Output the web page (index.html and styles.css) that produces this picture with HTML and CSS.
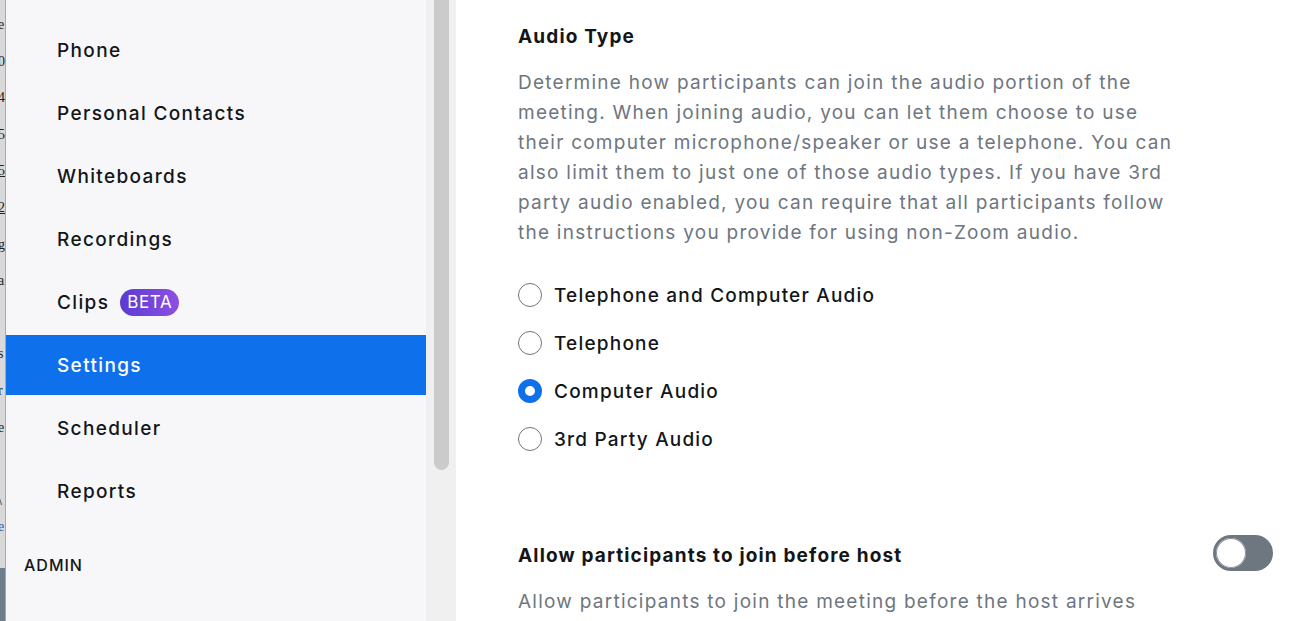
FILE: index.html
```html
<!DOCTYPE html>
<html lang="en">
<head>
<meta charset="utf-8">
<title>Settings</title>
<link rel="stylesheet" href="styles.css">
</head>
<body>
<div class="app">
  <div class="behind">
    <div class="behind-text">
      <span>e</span><span>0</span><span>4</span><span>5</span><span class="u">5</span><span class="u">2</span><span>g</span><span>a:</span><span></span><span>s</span><span>r</span><span>e</span><span></span><span class="small">\</span><span class="link">e</span>
    </div>
    <div class="behind-bottom"></div>
  </div>
  <nav class="sidebar">
    <ul class="nav">
      <li class="nav-item">Phone</li>
      <li class="nav-item">Personal Contacts</li>
      <li class="nav-item">Whiteboards</li>
      <li class="nav-item">Recordings</li>
      <li class="nav-item">Clips <span class="beta">BETA</span></li>
      <li class="nav-item active">Settings</li>
      <li class="nav-item">Scheduler</li>
      <li class="nav-item">Reports</li>
    </ul>
    <div class="section-label">ADMIN</div>
  </nav>
  <div class="gutter"><div class="thumb"></div></div>
  <main class="main">
    <section class="setting">
      <h2 class="setting-title">Audio Type</h2>
      <p class="setting-desc">Determine how participants can join the audio portion of the meeting. When joining audio, you can let them choose to use their computer microphone/speaker or use a telephone. You can also limit them to just one of those audio types. If you have 3rd party audio enabled, you can require that all participants follow the instructions you provide for using non-Zoom audio.</p>
      <div class="radios">
        <label class="radio"><span class="dot"></span>Telephone and Computer Audio</label>
        <label class="radio"><span class="dot"></span>Telephone</label>
        <label class="radio"><span class="dot checked"></span>Computer Audio</label>
        <label class="radio"><span class="dot"></span>3rd Party Audio</label>
      </div>
    </section>
    <section class="setting setting-toggle">
      <div class="setting-row">
        <h2 class="setting-title">Allow participants to join before host</h2>
        <span class="toggle"><span class="knob"></span></span>
      </div>
      <p class="setting-desc">Allow participants to join the meeting before the host arrives</p>
    </section>
  </main>
</div>
</body>
</html>
```

FILE: styles.css
```css
* { box-sizing: border-box; }
html, body { margin: 0; padding: 0; }
body {
  width: 1292px;
  height: 621px;
  overflow: hidden;
  background: #ffffff;
  font-family: Inter, "Noto Sans", "Liberation Sans", sans-serif;
  color: #131619;
}
.app {
  display: flex;
  height: 621px;
}
.behind {
  width: 6px;
  flex: none;
  display: flex;
  flex-direction: column;
  background: #d9d9d9;
  border-right: 1px solid #a9a9a9;
  overflow: hidden;
}
.behind-text {
  flex: 1;
  display: flex;
  flex-direction: column;
  padding-top: 14px;
  font-family: "Liberation Serif", serif;
  font-size: 14px;
  color: #222;
}
.behind-text span {
  height: 36.6px;
  line-height: 22px;
  margin-left: -2px;
}
.behind-text .u { text-decoration: underline; }
.behind-text .small { height: 26px; }
.behind-text .link { color: #2a5db0; }
.behind-bottom {
  height: 53px;
  flex: none;
  background: #6f7e8d;
}
.sidebar {
  width: 420px;
  flex: none;
  background: #f7f7fa;
  display: flex;
  flex-direction: column;
}
.nav {
  list-style: none;
  margin: 0;
  padding: 20px 0 0;
  display: flex;
  flex-direction: column;
  gap: 3px;
}
.nav-item {
  height: 60px;
  display: flex;
  align-items: center;
  gap: 11px;
  padding-left: 51px;
  font-size: 19px;
  font-weight: 500;
  letter-spacing: 1.35px;
}
.nav-item.active {
  background: #0e71eb;
  color: #ffffff;
}
.beta {
  display: inline-flex;
  align-items: center;
  height: 27px;
  padding: 0 7px 0 7px;
  border-radius: 14px;
  background: linear-gradient(90deg, #5a3bd3 0%, #8e4fe3 100%);
  color: #ffffff;
  font-size: 17px;
  font-weight: 400;
  letter-spacing: 0.6px;
}
.section-label {
  margin-top: 33px;
  padding-left: 18px;
  font-size: 16px;
  font-weight: 500;
  letter-spacing: 1px;
  line-height: 22px;
}
.gutter {
  width: 30px;
  flex: none;
  background: #f0f0f0;
  padding-left: 8px;
}
.thumb {
  width: 15px;
  height: 470px;
  background: #cbcbcb;
  border-radius: 0 0 8px 8px;
}
.main {
  flex: 1;
  padding: 22px 19px 0 62px;
}
.setting-title {
  margin: 0;
  font-size: 19px;
  line-height: 30px;
  font-weight: 700;
  color: #131619;
  letter-spacing: 1.15px;
}
.setting-desc {
  margin: 16px 0 0;
  max-width: 660px;
  font-size: 19px;
  line-height: 30px;
  color: #6e7680;
  letter-spacing: 1.25px;
}
.radios {
  margin-top: 23px;
  display: flex;
  flex-direction: column;
}
.radio {
  height: 48px;
  display: flex;
  align-items: center;
  gap: 12px;
  font-size: 19px;
  font-weight: 500;
  letter-spacing: 1.2px;
}
.dot {
  width: 24px;
  height: 24px;
  border-radius: 50%;
  border: 1.5px solid #6e7680;
  background: #ffffff;
  flex: none;
}
.dot.checked {
  border: 7px solid #0e71eb;
}
.setting-toggle {
  margin-top: 78px;
}
.setting-row {
  display: flex;
  align-items: flex-start;
  justify-content: space-between;
}
.toggle {
  width: 60px;
  height: 36px;
  border-radius: 18px;
  background: #6e7680;
  padding: 3px;
  display: flex;
  align-items: center;
  margin-top: -6px;
  margin-bottom: -6px;
}
.knob {
  width: 30px;
  height: 30px;
  border-radius: 50%;
  background: #ffffff;
  box-shadow: inset 0 0 0 1px #8a9099;
}
```
